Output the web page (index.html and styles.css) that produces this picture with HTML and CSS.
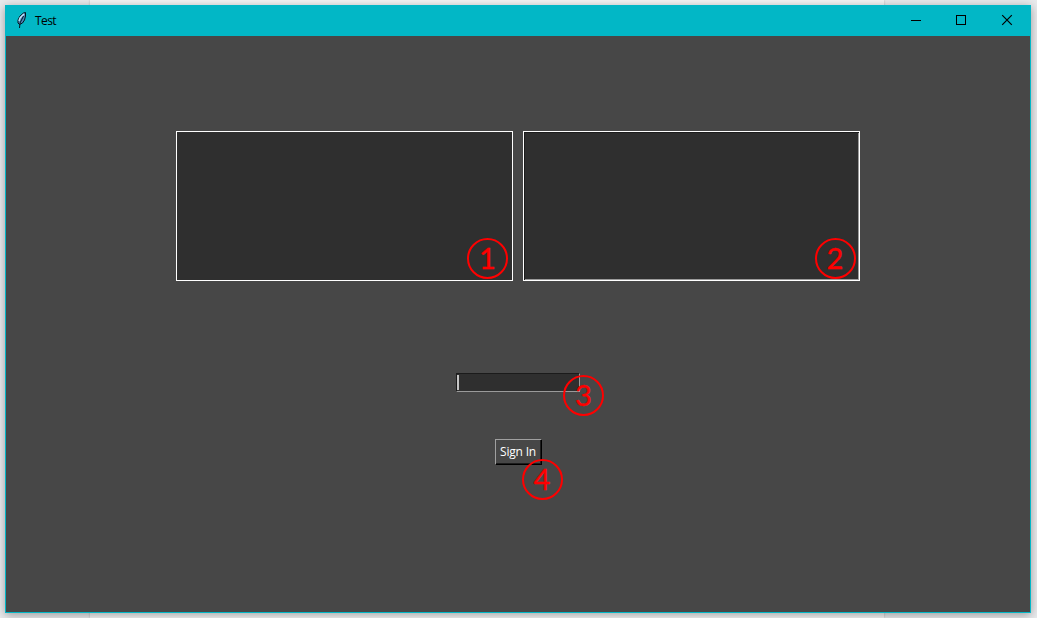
FILE: index.html
```
<!DOCTYPE html>
<html lang="en">
<head>
<meta charset="utf-8">
<title>Test</title>
<link rel="stylesheet" href="styles.css">
</head>
<body>
<div class="backdrop"></div>
<main class="window">
  <header class="titlebar">
    <svg class="feather" width="12" height="16" viewBox="0 0 12 16">
      <path d="M7.5 1 9.5.5 9.5 4 8.5 8 6.5 11 3.5 12.5 2 11 2 8 4 4Z" fill="#4d86bd" stroke="#06131c"/>
      <path d="M8 2 4 6 3 9" fill="none" stroke="#c6e4fa" stroke-width="1.4"/>
      <path d="M7.5 4 4 11 3.5 16" fill="none" stroke="#06131c"/>
    </svg>
    <span class="title">Test</span>
    <svg class="control" width="46" height="30" viewBox="0 0 46 30"><path d="M19 14.5h10" stroke="#000"/></svg>
    <svg class="control" width="46" height="30" viewBox="0 0 46 30"><rect x="18.5" y="9.5" width="9" height="9" fill="none" stroke="#000"/></svg>
    <svg class="control" width="46" height="30" viewBox="0 0 46 30"><path d="m18.2 9.2 9.6 9.6m0-9.6-9.6 9.6" stroke="#000" stroke-width="1.2"/></svg>
  </header>
  <section class="content">
    <div class="panels">
      <div class="panel"><span class="marker marker-one">1</span></div>
      <div class="panel sunken"><span class="marker marker-two">2</span></div>
    </div>
    <div class="entry"><i class="caret"></i><span class="marker marker-three">3</span></div>
    <div class="button"><span class="label">Sign In</span><span class="marker marker-four">4</span></div>
  </section>
</main>
</body>
</html>
```
FILE: styles.css
```
* { box-sizing: border-box; }
body {
  margin: 0;
  width: 1037px;
  height: 618px;
  padding: 5px 6px 5px 5px;
  overflow: hidden;
  background: #e9eaec;
  font-family: "Open Sans", "Noto Sans", sans-serif;
}
.backdrop {
  position: absolute;
  z-index: -1;
  left: 90px;
  top: 0;
  width: 794px;
  height: 618px;
  background: #f4f4f4;
  box-shadow: 0 0 2px #bbb;
}
.window {
  display: flex;
  flex-direction: column;
  width: 1026px;
  height: 608px;
  border: 1px solid #02b7c6;
  background: #474747;
  box-shadow: 0 2px 9px rgba(0, 0, 0, .34);
}
.titlebar {
  display: flex;
  flex: none;
  height: 30px;
  background: #02b7c6;
}
.feather { margin: 6px 0 0 10px; }
.title {
  flex: 1;
  margin-left: 7px;
  font-size: 12px;
  line-height: 30px;
  letter-spacing: -.6px;
  color: #000;
}
.control { flex: none; }
.content {
  display: flex;
  flex-direction: column;
  align-items: center;
  padding-top: 95px;
}
.panels { display: flex; gap: 10px; }
.panel {
  position: relative;
  width: 337px;
  height: 150px;
  border: 1px solid #fff;
  background: #2f2f2f;
}
.sunken { box-shadow: inset 1px 1px #1c1c1c, inset -1px -1px #9b9b9b; }
.entry {
  position: relative;
  width: 124px;
  height: 19px;
  margin-top: 92px;
  padding-top: 1px;
  border: 1px solid;
  border-color: #1b1b1b #9a9a9a #9a9a9a #1b1b1b;
  background: #2f2f2f;
}
.caret {
  display: block;
  width: 2px;
  height: 15px;
  background: #c5c5c5;
}
.button {
  position: relative;
  width: 47px;
  height: 26px;
  margin-top: 47px;
  border: 1px solid;
  border-color: #a0a0a0 #000 #000 #a0a0a0;
  box-shadow: inset -1px -1px #1d1d1d;
  color: #fff;
  font-size: 12px;
  line-height: 24px;
  text-align: center;
}
.label { letter-spacing: -.2px; white-space: nowrap; }
.marker {
  position: absolute;
  width: 41px;
  height: 41px;
  border: 2px solid #f00;
  border-radius: 50%;
  color: #f00;
  font-family: Lato, "Open Sans", sans-serif;
  font-size: 29px;
  line-height: 35px;
  text-align: center;
  -webkit-text-stroke: .35px #f00;
}
.marker-one { left: 290px; top: 106px; }
.marker-two { left: 291px; top: 106px; text-indent: -1px; }
.marker-three { left: 106px; top: 1px; }
.marker-four { left: 26px; top: 19px; }
```
